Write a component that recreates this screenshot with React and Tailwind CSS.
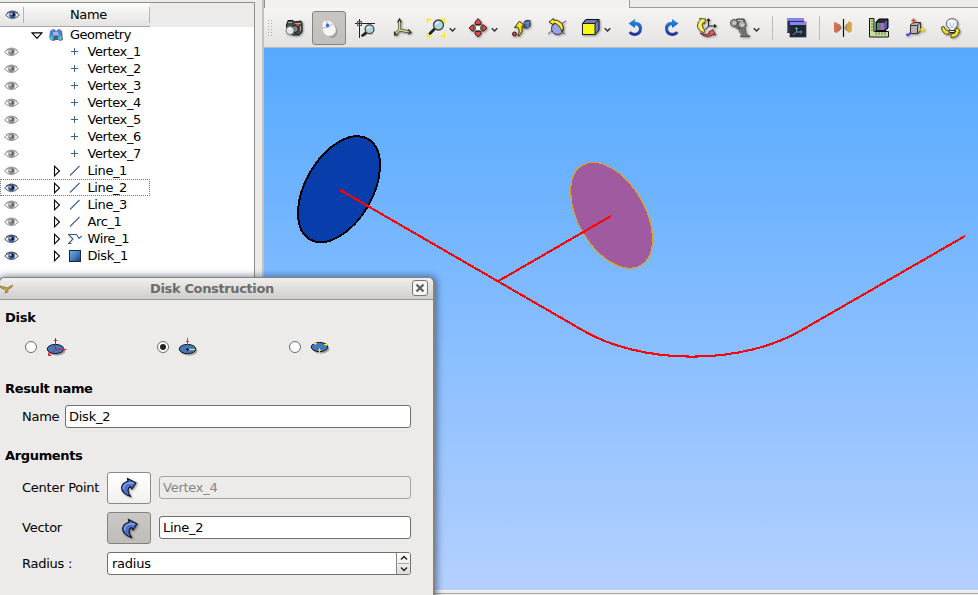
import React from "react";

const Svg = ({ w = 24, h = 24, className = "", children }) => (
  <svg width={w} height={h} viewBox={`0 0 ${w} ${h}`} className={`block shrink-0 ${className}`} fill="none">
    {children}
  </svg>
);

const shadow = "drop-shadow-[1px_1px_1px_rgba(0,0,0,0.4)]";

const Eye = ({ on }) => (
  <Svg w={15} h={10}>
    <path d="M.5 5Q4 1.500 7.500 1.500T14.500 5Q11 8.700 7.500 8.700T.5 5Z" fill={on ? "#dfe3ea" : "#f0f0f0"} stroke={on ? "#5d6778" : "#989898"} />
    <path d="M2 3Q7.500-1 13 3" stroke={on ? "#3b424e" : "#999"} />
    <circle cx="7.500" cy="5" r="3.200" fill={on ? "#34548f" : "#8c8c8c"} />
    <rect x="7.500" y="3" width="2" height="3" fill={on ? "#0a0f1c" : "#5c5c5c"} />
    <rect x="5.500" y="3" width="2" height="2" fill={on ? "#a9c0e6" : "#d5d5d5"} />
  </Svg>
);

const Expander = () => (
  <Svg w={8} h={12}>
    <path d="M1.500 1.200V10.800L6.500 6Z" stroke="#000" strokeWidth="1.100" fill="#fff" />
  </Svg>
);

const glyphs = {
  vertex: <path d="M3 6.500H10M6.500 3V10" stroke="#3d6290" />,
  line: <path d="M2 11.500L11.500 2" stroke="#3d5f8c" strokeWidth="1.100" />,
  wire: <path d="M3.500 11.500H.5L5 7L.5 2.500H8.500L11 6.500L13.700 4" stroke="#34598a" strokeWidth="1.100" />,
  disk: (
    <>
      <defs>
        <linearGradient id="face" x1="0" y1="0" x2="1" y2="1">
          <stop stopColor="#78b0e8" />
          <stop offset=".5" stopColor="#477fc0" />
          <stop offset="1" stopColor="#1d3c66" />
        </linearGradient>
      </defs>
      <rect x="1.500" y="1.500" width="11" height="11" fill="url(#face)" stroke="#142746" />
    </>
  ),
};

const items = [
  ["Vertex_1", "vertex", false],
  ["Vertex_2", "vertex", false],
  ["Vertex_3", "vertex", false],
  ["Vertex_4", "vertex", false],
  ["Vertex_5", "vertex", false],
  ["Vertex_6", "vertex", false],
  ["Vertex_7", "vertex", false],
  ["Line_1", "line", false],
  ["Line_2", "line", true],
  ["Line_3", "line", false],
  ["Arc_1", "line", false],
  ["Wire_1", "wire", true],
  ["Disk_1", "disk", true],
];

const TreeRow = ({ label, kind, on }) => (
  <div className={`flex h-[17px] w-[150px] items-center ${label === "Line_2" ? "outline-1 -outline-offset-1 outline-dotted outline-[#777]" : ""}`}>
    <div className="flex w-[53px] pl-1 pt-px"><Eye on={on} /></div>
    <div className="w-[15px] pt-px">{kind !== "vertex" && <Expander />}</div>
    <Svg w={15} h={14}>{glyphs[kind]}</Svg>
    <span className="pl-[4.500px] leading-[17px]">{label}</span>
  </div>
);

const Tree = () => (
  <div className="flex h-full w-[264px] shrink-0 flex-col border-r-2 border-[#c4c4c4] bg-[#ecebe9] pt-[2px] tracking-[-0.4px]">
    <div className="h-full w-[255px] border-r border-t border-[#8f8e8c] bg-white">
      <div className="flex h-[24px] bg-[#ecebe9]">
        <div className="flex w-[150px] items-center border-b border-[#aaa9a7] bg-linear-to-b from-[#fcfcfc] to-[#e4e3e1]">
          <div className="flex h-[16px] w-[24px] items-center border-r border-[#b5b4b2] pl-[5px]"><Eye on /></div>
          <div className="flex h-[16px] flex-1 items-center border-r border-[#b5b4b2] pl-[46px] tracking-[-0.4px]">Name</div>
        </div>
      </div>
      <div className="flex h-[16px] items-center pl-[31px]">
        <Svg w={12} h={9}><path d="M1 1.800H11L6 7.300Z" stroke="#000" strokeWidth="1.200" /></Svg>
        <Svg w={16} h={14} className="ml-[5px]">
          <path d="M3 3L6 1L9 4L11 1L14 3L15 12L12 13L9 11L6 13L2 12Z" fill="#27364a" opacity=".75" />
          <path d="M2 3L5 1L8 3.500L10 1L13 2.500L14 10L10 9L8 8L5 10L1 10Z" fill="#5581c4" />
          <path d="M5 4H10L11 7L8 9L5 7Z" fill="#94b8f0" />
          <path d="M5 9L8 7L11 9L10 12H6Z" fill="#4a5f80" />
          <circle cx="3.500" cy="10" r="2.100" fill="#4cc0cc" />
          <circle cx="12" cy="10" r="2.100" fill="#4cc0cc" />
        </Svg>
        <span className="-mt-px pl-[6px] leading-[15px] tracking-[-0.5px]">Geometry</span>
      </div>
      {items.map(([label, kind, on]) => <TreeRow key={label} label={label} kind={kind} on={on} />)}
    </div>
  </div>
);

const Lens = ({ cx, cy, r, hx, hy }) => (
  <>
    <path d={`M${cx - r * 0.8} ${cy + r * 0.8}L${hx} ${hy}`} stroke="#222" strokeWidth="2.800" strokeLinecap="round" />
    <circle cx={cx} cy={cy} r={r} fill="#b5d3dc" stroke="#3c4347" strokeWidth="1.300" />
    <path d={`M${cx - r * 0.5} ${cy - r * 0.2}L${cx} ${cy - r * 0.6}`} stroke="#eefaff" strokeWidth="1.500" />
  </>
);

const Camera = () => (
  <Svg className={shadow}>
    <path d="M4.500 9L6 4.500H11L12 6L19 5L20 7V16L17 19H11L5 16Z" fill="#4a4c4c" stroke="#181818" />
    <path d="M6 6.500H10M13 7.500H19M18.500 10V15" stroke="#a5a5a2" />
    <rect x="14" y="8" width="3" height="2" fill="#df4338" />
    <circle cx="13" cy="13" r="3.500" fill="#7c8281" stroke="#151515" />
    <circle cx="8" cy="14.500" r="4" fill="#dceae9" stroke="#738484" />
    <path d="M6 14Q7 12 9 12.500" stroke="#fff" strokeWidth="1.300" />
  </Svg>
);

const Mouse = () => (
  <Svg>
    <ellipse cx="14" cy="14.500" rx="6.300" ry="7.500" transform="rotate(-35 14 14.500)" fill="#77756f" opacity=".45" />
    <path d="M5.500 7.500Q6.500 4.500 9.500 4.500Q13 4 16 8Q19.500 12 18.500 16Q16.500 20 12 20Q7 19.500 6 14Z" fill="#f6f6f6" stroke="#dadada" strokeWidth=".6" />
    <path d="M6 11.500Q11 13 15 8M10 7L9.500 4.500" stroke="#a9adba" strokeWidth=".9" />
    <ellipse cx="10.500" cy="9.300" rx="1.600" ry="2" fill="#3c66cf" />
  </Svg>
);

const FitArea = () => (
  <Svg>
    <path d="M1 7.500H21M5.500 3V22" stroke="#222" />
    <rect x="3.500" y="5.500" width="4" height="4" stroke="#555" />
    <path d="M10 20L13 17L19 18" stroke="#000" opacity=".2" strokeWidth="2" />
    <Lens cx={15.500} cy={13.300} r={4.400} hx={8.500} hy={19.500} />
  </Svg>
);

const Trihedron = () => (
  <Svg className={shadow}>
    <path d="M9.500 14V4M9.500 14L20 16M9.500 14L5 18.500" stroke="#4a4a36" strokeWidth="2.800" />
    <path d="M9.500 14V5M9.500 14L19 15.800M9.500 14L6 17.500" stroke="#d3d496" strokeWidth="1.600" />
    <path d="M7.500 6.500L9.500 3L11.500 6.500M18 13.500L21 16.500L18 18M4.500 15.500V19H8" stroke="#303026" strokeWidth="1.200" />
  </Svg>
);

const FitAll = () => (
  <Svg w={20} h={24}>
    <path d="M1.500 7V3.500H5M14.500 3.500H18.500V7M1.500 16.500V20.500H5M14.500 20.500H18.500V16.500" stroke="#f8f000" strokeWidth="1.500" />
    <Lens cx={12.500} cy={9} r={5} hx={4} hy={17.500} />
  </Svg>
);

const Pan = () => (
  <Svg w={20} h={24} className={shadow}>
    <g fill="#dd4648" stroke="#2b2020" strokeWidth=".9">
      <path d="M7 8.500V6L10 2.500L13 6V8.500Z" />
      <path d="M7 15.500V18L10 21L13 18V15.500Z" />
      <path d="M6 9H4L1 12L4 15H6Z" />
      <path d="M14 9H16L19 12L16 15H14Z" />
    </g>
    <rect x="7.500" y="9.500" width="5" height="5" fill="#faf7ef" />
    <path d="M8 9.500H12M8 14.500H12M7.500 10V14M12.500 10V14" stroke="#555" strokeWidth=".8" />
  </Svg>
);

const GlobalPan = () => (
  <Svg className={shadow}>
    <path d="M14 6L16 4.500H20V10L18 12H14Z" fill="#4a6b9c" stroke="#24374e" />
    <path d="M14 7H18V12M18 7L20 5" stroke="#7d9fce" strokeWidth=".8" />
    <path d="M9 20Q13.500 16 12 10L14.500 10L9.500 5L4.500 11.500L7.500 11Q10.500 14 8 20Z" fill="#f7e52a" stroke="#39310a" />
    <circle cx="4.500" cy="18" r="2" fill="#d04350" stroke="#372020" />
  </Svg>
);

const RotPoint = () => (
  <Svg className={shadow}>
    <path d="M2 18L7 14M15 8L20 5M7 8L4 6M16 16L19 18" stroke="#555" />
    <circle cx="11.500" cy="12.500" r="6" fill="#9aa3e4" stroke="#31364c" />
    <path d="M3 6L7.500 2.500V4Q16 4 17.500 12L16 16Q14 8.500 8 7V9Z" fill="#f8eb36" stroke="#2f2b0a" strokeWidth=".9" />
  </Svg>
);

const Cube = () => (
  <Svg w={20} h={24} className={shadow}>
    <path d="M1.500 8L5 3.500H18V14L14 18.500Z" fill="#7479c9" stroke="#111" />
    <path d="M14 7.500L18 3.500M5 3.500L1.500 7.500" stroke="#111" />
    <rect x="1.500" y="7.500" width="12.500" height="11" fill="#f8fa19" stroke="#222" />
  </Svg>
);

const Turn = ({ flip, id }) => (
  <Svg>
    <defs>
      <linearGradient id={id} x1="0" y1="0" x2="0" y2="1">
        <stop stopColor="#2294ec" />
        <stop offset="1" stopColor="#202c94" />
      </linearGradient>
    </defs>
    <g transform={flip ? "matrix(-1 0 0 1 25 0)" : undefined} fill={`url(#${id})`}>
      <path d="M5.500 7.500L12 3V5.700Q19 6 19 12.500Q18.500 19.500 12 20Q8 20 5.500 17L7.800 15.200Q9.500 17 12 17Q15.500 16.500 16 12.700Q15.500 9.500 12 9.300V12Z" />
    </g>
  </Svg>
);

const ResetView = () => (
  <Svg className={shadow}>
    <path d="M13.500 10V3M13.500 10H21M13.500 10L10.500 13.500M12 5L13.500 3L15 5M19 8.500L21 10L19 11.500" stroke="#222" strokeWidth="1.100" />
    <path d="M9 17Q2 14 2.500 9Q3 5 5.500 4L4.500 2.500L10.500 3L9.500 8L8.500 6.500Q5.500 9 9.500 14Z" fill="#f5ec60" stroke="#4c4311" strokeWidth=".9" />
    <path d="M5 17Q9 20 15 17.500L13.500 16L18 13.500L20.500 19L18 18.500Q11 23 5 17Z" fill="#e85b62" stroke="#53201f" strokeWidth=".9" />
  </Svg>
);

const ViewCamera = () => (
  <Svg className={shadow}>
    <path d="M13 13L15 18L12 20.500H22L18 18L17 12" fill="#777" stroke="#4c4c4c" strokeWidth=".9" />
    <path d="M4 8L9 3L16 3L18 10L10 13Z" fill="#777775" stroke="#464645" />
    <circle cx="6" cy="7" r="3.500" fill="#aaaaa7" stroke="#4c4c4c" />
    <circle cx="14" cy="8.500" r="3.700" fill="#b2b2b2" stroke="#464645" />
    <path d="M5 7H8M10 4.500L15 5M13 9H16" stroke="#e4e4e4" />
    <path d="M11 13L13 18" stroke="#666" strokeWidth="1.500" />
  </Svg>
);

const CloneWin = () => (
  <Svg>
    <rect x="2" y="2" width="17" height="15" fill="#2c3149" />
    <rect x="2" y="2" width="17" height="3" fill="#8383f1" />
    <path d="M2.500 5V16.500" stroke="#6666d0" />
    <rect x="5" y="6" width="16" height="15" fill="#23262d" stroke="#292d6d" strokeWidth=".7" />
    <rect x="5" y="6" width="16" height="3" fill="#8585f5" />
    <path d="M16 3.500H18M18 7.500H20" stroke="#f06575" />
    <path d="M11.500 12V16L17 16M11.500 16L8 19M10 13L11.500 11.500L13 13M15.500 14.500L17 16L15.500 17.500" stroke="#51a8bd" />
  </Svg>
);

const Clipping = () => (
  <Svg>
    <defs>
      <linearGradient id="clipL"><stop stopColor="#df6d58" /><stop offset="1" stopColor="#a57a4d" /></linearGradient>
      <linearGradient id="clipR"><stop stopColor="#a9a04f" /><stop offset="1" stopColor="#efaa3d" /></linearGradient>
    </defs>
    <path d="M3 6L6 7L10 10V13L6 17L3 16Z" fill="url(#clipL)" />
    <path d="M14 11L18 5L21 7V15L18 17L14 13Z" fill="url(#clipR)" />
    <path d="M8 8L10.500 12L8 15M16 8L13.500 12L16 15" stroke="#8d8470" strokeWidth=".8" />
    <path d="M12.500 3V21" stroke="#111" strokeWidth="1.200" />
  </Svg>
);

const Scaling = () => (
  <Svg>
    <path d="M2.500 2.500H7V15.500H21.500V21H2.500Z" fill="#c9de98" stroke="#111" />
    <path d="M4 5H7M4 8H7M4 11H7M4 14H7M9 16V19M12 16V19M15 16V19M18 16V19" stroke="#4c5d36" strokeWidth=".8" />
    <path d="M9 6L12 3H21V12L18 15H9Z" fill="#29283e" stroke="#000" />
    <path d="M10 7H13V14H10Z" fill="#42965e" />
    <path d="M13 7H17V14H13Z" fill="#857ac4" />
    <path d="M17 7L20 4V12L17 14" fill="#5e58a1" />
    <path d="M13 7V14" stroke="#c4525d" />
  </Svg>
);

const Graduated = () => (
  <Svg className={shadow}>
    <path d="M7.500 9L10 6.500H17.500V14.500L15 17.500H7.500Z" fill="#b5b4af" stroke="#363636" />
    <path d="M7.500 9.500H14.500V17.500M14.500 9.500L17 6.500" stroke="#363636" />
    <path d="M10.500 8V2.500M8.500 4.500H12.500" stroke="#f03531" strokeWidth="1.300" />
    <path d="M16 13.500H22M19.500 11.500V16" stroke="#ece024" strokeWidth="1.300" />
    <path d="M8 16L4 20M3 18.500H7" stroke="#3f3bdc" strokeWidth="1.300" />
  </Svg>
);

const Ambient = () => (
  <Svg className={shadow}>
    <path d="M10 18.500Q3 18.500 2.500 11L5 10.500Q6 15 10 15Z" fill="#efe32e" stroke="#45400d" strokeWidth=".9" />
    <path d="M12 18Q16.500 18 17 15L15.500 15L18.500 11.500L21 15.500L20 16Q19 21.500 12 21.500Z" fill="#efe32e" stroke="#45400d" strokeWidth=".9" />
    <path d="M10.500 13Q6.500 9.500 7.500 6Q9 2.500 13 2.500T18.500 6Q19.500 9.500 15.500 13V17H10.500Z" fill="#eef4f5" stroke="#4d5556" strokeWidth=".9" />
    <path d="M11 7L12.500 12M15 7L13.500 12" stroke="#9aa3a4" strokeWidth=".7" />
    <path d="M11 14.500H15.500M11 16.500H15" stroke="#222" />
  </Svg>
);

const Chevron = () => (
  <Svg w={7} h={6} className="mt-[4px]"><path d="M.7 1.200L3.500 4L6.300 1.200" stroke="#2d2d2d" strokeWidth="1.400" /></Svg>
);

const Tool = ({ children, className = "w-[36px]" }) => (
  <div className={`flex h-[34px] shrink-0 items-center justify-center ${className}`}>{children}</div>
);

const Sep = ({ className }) => <div className={`h-[24px] w-px shrink-0 bg-[#bdbcba] ${className}`} />;

const Toolbar = () => (
  <div className="flex h-[40px] shrink-0 items-center border-b border-[#b9b8b6] bg-linear-to-b from-[#f6f5f4] to-[#e3e2e0] pl-[3px]">
    <Svg w={9} h={18}>
      {[1, 4, 7, 10, 13, 16].map((y) => <path key={y} d={`M1 ${y}.500H2M4 ${y}.500H5`} stroke="#aaa9a7" />)}
    </Svg>
    <Tool className="w-[36px]"><Camera /></Tool>
    <Tool className="w-[34px] rounded-[3px] border border-[#85827e] bg-linear-to-b from-[#c8c6c3] to-[#c1bfbc]"><Mouse /></Tool>
    <Tool className="ml-[2px] w-[36px]"><FitArea /></Tool>
    <Tool><Trihedron /></Tool>
    <Tool className="w-[42px] gap-[3px]"><FitAll /><Chevron /></Tool>
    <Tool className="w-[42px] gap-[3px]"><Pan /><Chevron /></Tool>
    <Tool className="w-[36px]"><GlobalPan /></Tool>
    <Tool className="w-[35px]"><RotPoint /></Tool>
    <Tool className="w-[42px] gap-[3px]"><Cube /><Chevron /></Tool>
    <Tool><Turn id="turnLeft" /></Tool>
    <Tool><Turn flip id="turnRight" /></Tool>
    <Tool className="w-[35px]"><ResetView /></Tool>
    <Tool className="ml-px w-[38px] gap-px"><ViewCamera /><Chevron /></Tool>
    <Sep className="ml-[9px]" />
    <Tool className="ml-[6px] w-[36px]"><CloneWin /></Tool>
    <Sep className="ml-[4px]" />
    <Tool className="ml-[5px] w-[36px]"><Clipping /></Tool>
    <Tool><Scaling /></Tool>
    <Tool><Graduated /></Tool>
    <Tool><Ambient /></Tool>
  </div>
);

const Scene = () => (
  <svg viewBox="264 48 714 542" className="block h-[542px] w-[714px]" fill="none" shapeRendering="crispEdges">
    <defs>
      <linearGradient id="sky" x1="0" y1="0" x2="0" y2="1">
        <stop stopColor="#55a9ff" />
        <stop offset="1" stopColor="#b4d0ff" />
      </linearGradient>
    </defs>
    <rect x="264" y="48" width="714" height="542" fill="url(#sky)" />
    <ellipse cx="339" cy="189.200" rx="58" ry="33.500" transform="rotate(-60 339 189.200)" fill="#073eac" stroke="#000" strokeWidth="2" />
    <ellipse cx="611.600" cy="215.300" rx="58" ry="33.500" transform="rotate(60 611.600 215.300)" fill="#a05ba0" stroke="#d9a02b" strokeWidth="1.300" />
    <path d="M340 190L583 330.500A154 89 0 0 0 801 330.500L965 236M498.500 281L611 216" stroke="#f00" strokeWidth="2.100" />
  </svg>
);

const MiniDisk = ({ variant }) => (
  <Svg w={22} h={22}>
    <ellipse cx="12" cy={variant === "points" ? 13 : 15} rx="8.500" ry="4.700" fill="#000" opacity=".3" />
    <ellipse cx="10.500" cy={variant === "points" ? 11 : 13} rx="8.300" ry="4.600" fill="#4578b9" stroke="#0d1420" />
    {variant === "axes" && <path d="M10.500 13.500V2M9 4.500H12M10.500 13.500H21.500M18.500 12V15M10.500 13.500L4 19M3.500 16.500V19.500H6" stroke="#cf1f2a" />}
    {variant === "vector" && (
      <>
        <path d="M10.500 12.500V2M9 5.500H12" stroke="#d0404a" />
        <path d="M12 13.500H18" stroke="#f0ee56" />
        <path d="M9 13.500H12M10.500 12V15" stroke="#111" />
      </>
    )}
    {variant === "points" && <path d="M4 7.500H8M6.500 6V9M15 8.500H19M17.500 7V10M9 14.500H12M10.500 12V17" stroke="#f4e52a" />}
  </Svg>
);

const Radio = ({ checked, variant, className }) => (
  <div className={`flex items-center ${className}`}>
    <div className="flex size-[12px] items-center justify-center rounded-full border border-[#6b6b6b] bg-white">
      {checked && <div className="size-[6px] rounded-full bg-[#222]" />}
    </div>
    <div className="ml-[8px]"><MiniDisk variant={variant} /></div>
  </div>
);

const PickButton = ({ pressed }) => (
  <div className={`flex h-[32px] w-[44px] shrink-0 items-center justify-center rounded-[3px] border ${pressed ? "border-[#85827e] bg-linear-to-b from-[#cac8c5] to-[#bfbdba] pl-px pt-px" : "border-[#8c8a87] bg-linear-to-b from-white to-[#f0f0ef]"}`}>
    <Svg w={18} h={22} className={shadow}>
      <path d="M8 4.300L7.500 1.500L16 6L12 12L10.500 9.500Q5.500 12 10.500 19.500Q2 17 1.500 10.500Q2.500 5.500 8 4.300Z" fill="#4e70c6" stroke="#0b1021" strokeWidth="1.100" />
      <path d="M3.500 12Q3.500 7.500 8.500 6L13.500 6" stroke="#8eaaf0" strokeWidth="1.300" />
    </Svg>
  </div>
);

const Label = ({ children }) => <div className="w-[85px] shrink-0 whitespace-nowrap leading-4">{children}</div>;

const Dialog = () => (
  <div className="absolute left-[-2px] top-[277px] h-[330px] w-[437px] rounded-t-[6px] border-2 border-t border-[#858481] bg-[#ecebe9] tracking-[-0.25px] shadow-[1px_0_7px_1px_rgba(20,40,70,0.55)]">
    <div className="flex h-[22px] items-center rounded-t-[5px] border-b border-[#989795] bg-linear-to-b from-[#f0efee] to-[#cfcecc]">
      <Svg w={14} h={14}>
        <path d="M0 4L4 5L7 6L13 3L11 6L8 7V10L5 11L6 8L1 6Z" fill="#d7a12e" stroke="#765a27" strokeWidth=".6" />
      </Svg>
      <div className="flex-1 pr-[2px] text-center font-bold tracking-[-0.37px] text-[#6c6c6a]">Disk Construction</div>
      <div className="mb-[2px] mr-[5px] flex size-[16px] items-center justify-center rounded-[3px] border border-[#777] bg-[#f5f5f4]">
        <Svg w={10} h={10}><path d="M1.500 1.500L8.500 8.500M8.500 1.500L1.500 8.500" stroke="#5e5e5c" strokeWidth="2.200" /></Svg>
      </div>
    </div>
    <div className="flex flex-col">
      <h2 className="mt-[10px] pl-[5px] font-bold leading-4">Disk</h2>
      <div className="mt-[9px] flex h-[24px] pl-[25px]">
        <Radio variant="axes" className="w-[132px]" />
        <Radio variant="vector" checked className="w-[132px]" />
        <Radio variant="points" className="w-[60px]" />
      </div>
      <h2 className="mt-[22px] pl-[5px] font-bold leading-4 tracking-[-0.35px]">Result name</h2>
      <div className="mt-[8px] flex items-center pl-[22px]">
        <div className="w-[43px]">Name</div>
        <div className="flex h-[23px] w-[346px] items-center rounded-[3px] border border-[#706f69] bg-white pl-[3px]">Disk_2</div>
      </div>
      <h2 className="mt-[20px] pl-[5px] font-bold leading-4 tracking-[-0.35px]">Arguments</h2>
      <div className="mt-[8px] flex items-center pl-[22px]">
        <Label>Center Point</Label>
        <PickButton />
        <div className="mb-px ml-[8px] flex h-[23px] w-[252px] items-center rounded-[3px] border border-[#a5a4a2] pl-[3px] text-[#868582]">Vertex_4</div>
      </div>
      <div className="mt-[8px] flex items-center pl-[22px]">
        <Label>Vector</Label>
        <PickButton pressed />
        <div className="mb-px ml-[8px] flex h-[23px] w-[252px] items-center rounded-[3px] border border-[#706f69] bg-white pl-[3px]">Line_2</div>
      </div>
      <div className="mt-[8px] flex items-center pl-[22px]">
        <Label>Radius :</Label>
        <div className="flex h-[23px] w-[304px] items-center overflow-hidden rounded-[3px] border border-[#706f69] bg-white pl-[4px]">
          <div className="flex-1">radius</div>
          <div className="flex h-full w-[14px] flex-col items-center justify-between border-l border-[#858481] bg-linear-to-b from-white to-[#dedddb] py-[2px]">
            <Svg w={8} h={6}><path d="M1 4.500L4 1.500L7 4.500" stroke="#222" strokeWidth="1.500" /></Svg>
            <div className="h-px w-[11px] bg-[#aaa]" />
            <Svg w={8} h={6}><path d="M1 1.500L4 4.500L7 1.500" stroke="#222" strokeWidth="1.500" /></Svg>
          </div>
        </div>
      </div>
    </div>
  </div>
);

export default function App() {
  return (
    <div className="relative flex h-[595px] w-[978px] overflow-hidden bg-[#ecebe9] font-['DejaVu_Sans',sans-serif] text-[13px] leading-4 text-black">
      <Tree />
      <main className="flex w-[714px] shrink-0 flex-col">
        <div className="flex h-[8px] shrink-0">
          <div className="h-full w-[365px] border-l border-[#8f8e8c] bg-[#f2f1ef]" />
          <div className="h-full flex-1 border-b border-l border-[#9d9c9a]" />
        </div>
        <Toolbar />
        <Scene />
        <div className="h-[5px] border-t border-[#f5f5f4] pt-[2px]"><div className="h-px bg-[#aaa9a7]" /></div>
      </main>
      <Dialog />
    </div>
  );
}
